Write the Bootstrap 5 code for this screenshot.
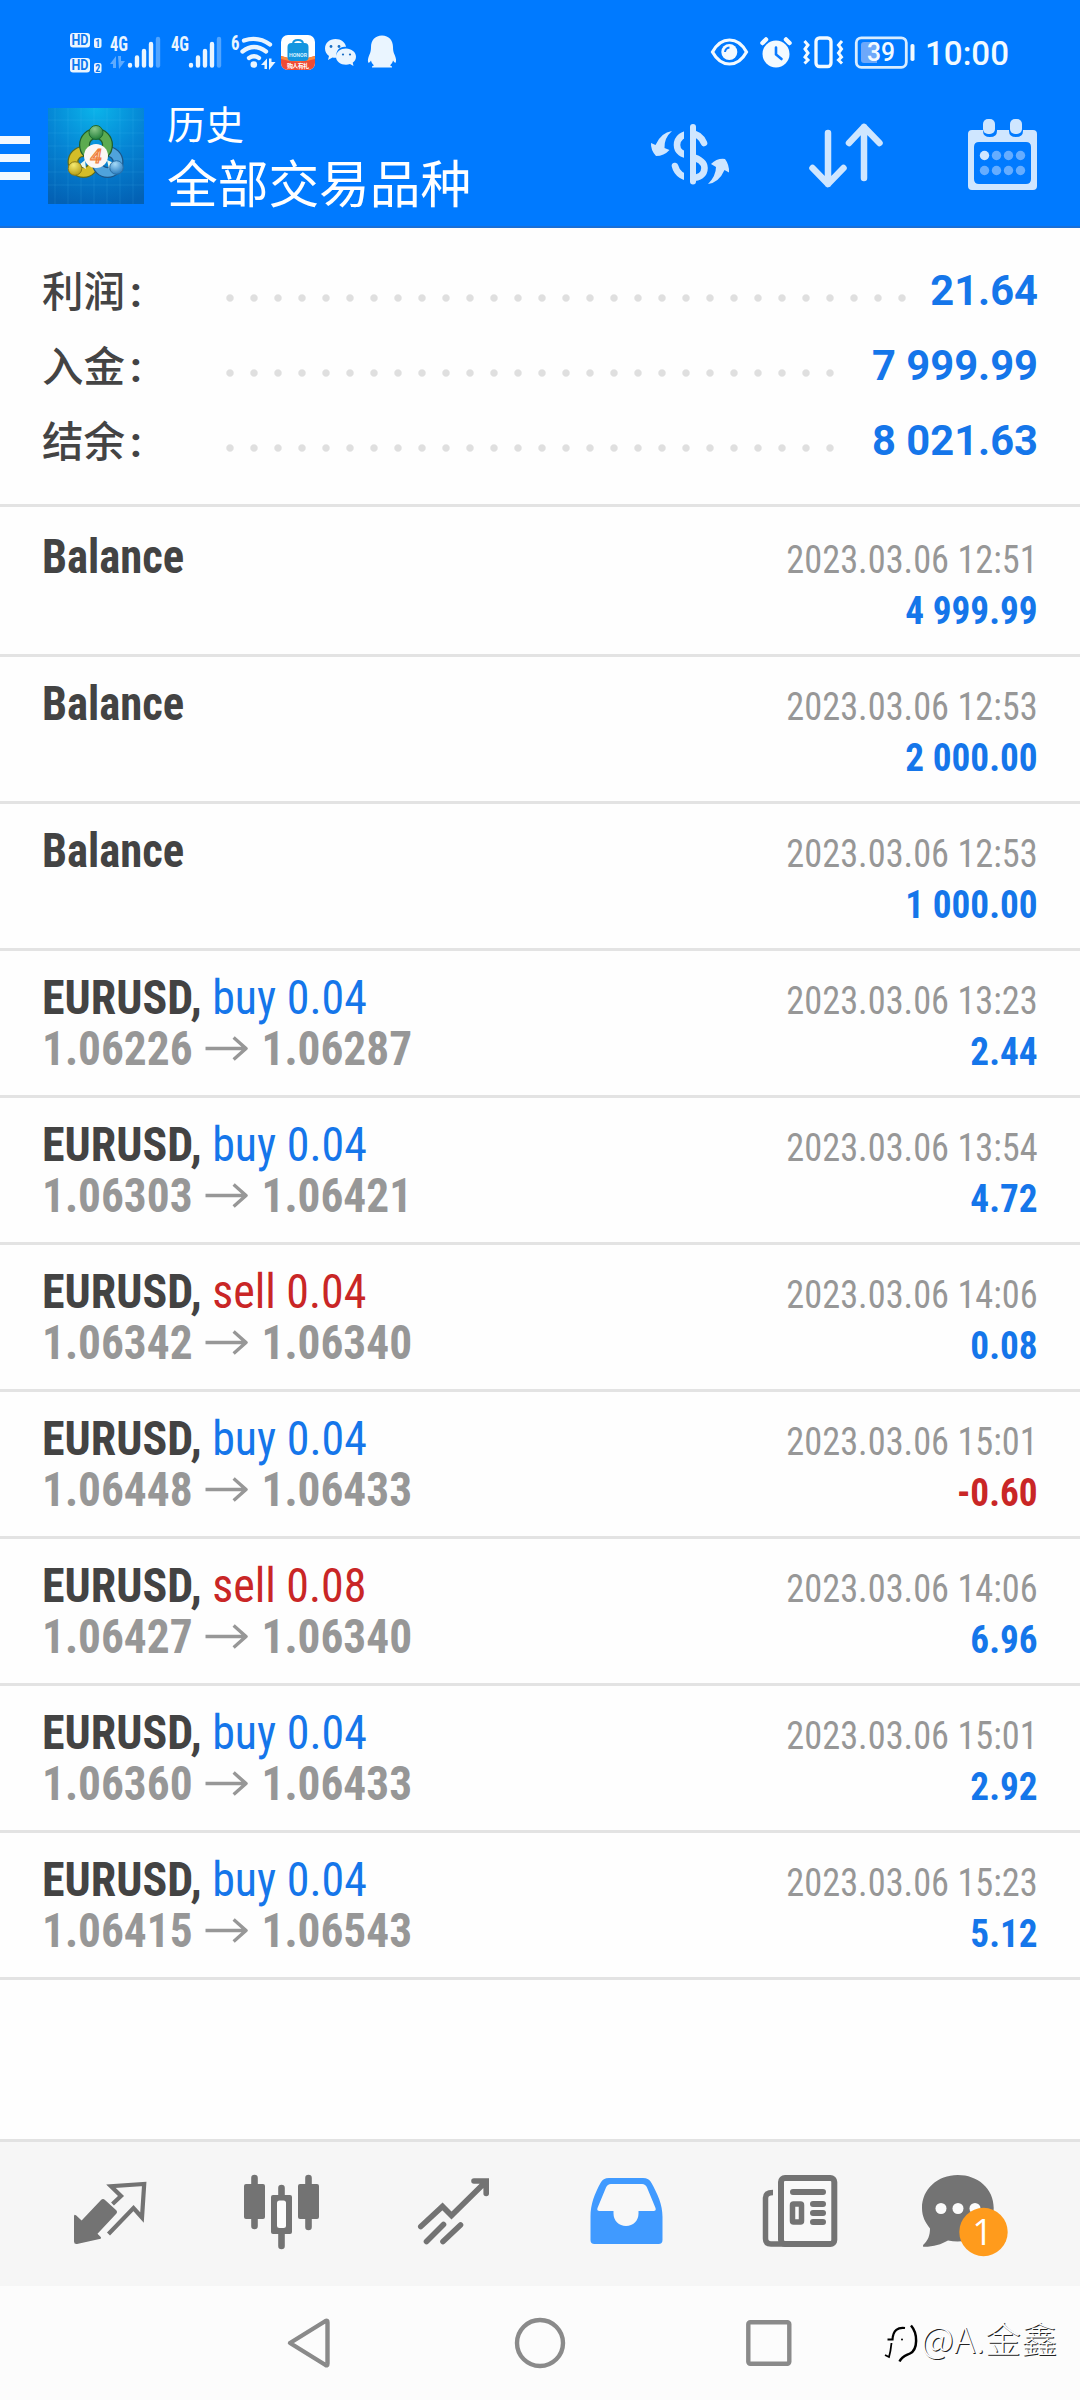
<!DOCTYPE html>
<html lang="zh-CN">
<head>
<meta charset="utf-8">
<meta name="viewport" content="width=device-width, initial-scale=1">
<title>历史</title>
<link rel="stylesheet" href="https://cdn.jsdelivr.net/npm/bootstrap@5.3.0/dist/css/bootstrap.min.css">
<script src="https://cdn.jsdelivr.net/npm/bootstrap@5.3.0/dist/js/bootstrap.bundle.min.js"></script>
<style>
  body { background: #fefefe; font-family: Roboto, "Noto Sans CJK SC", sans-serif; }
  .screen { width: 1080px; height: 2400px; overflow: hidden; }
  .top-area { height: 228px; background: #007aff; border-bottom: 2px solid #1a6fd6; }
  .status-row { height: 100px; }
  .title-row { height: 126px; }
  svg { display: block; flex: none; }
  .brand-tile { width: 96px; height: 96px; margin: 8px 23px 0 18px; }
  .title-small { font: 400 38.500px/46px "Noto Sans CJK SC", sans-serif; margin-top: -1px; }
  .title-big { font: 400 50.700px/62px "Noto Sans CJK SC", sans-serif; margin-top: 5px; white-space: nowrap; }
  .summary { height: 279px; padding: 25px 42px 0; border-bottom: 3px solid #e3e3e3; }
  .sum-line { height: 75px; }
  .sum-label { width: 176px; height: 77px; color: #444; font: 500 41.500px/75px "Noto Sans CJK SC", sans-serif; }
  .sum-label b { font: 700 42px/75px Roboto, sans-serif; margin-left: 5px; }
  .dots { height: 8px; margin-top: 15px; background: radial-gradient(circle at 12px 4px, #dfdfdf 3.200px, transparent 4.200px) 0 0 / 24px 8px repeat-x; }
  .dots-long { width: 696px; }
  .dots-short { width: 624px; }
  .sum-value { font: 700 41.700px/75px Roboto, sans-serif; }
  .c-blue { color: #1576ea; }
  .c-red { color: #c92626; }
  .deals { padding-top: 3px; height: 1632px; }
  .deal { height: 147px; padding: 21px 42px 0; border-bottom: 3px solid #e3e3e3; font: 400 48px/51px "Roboto Condensed", Roboto, sans-serif; white-space: nowrap; }
  .deal strong { color: #434343; font-weight: 700; }
  /* tighter glyph widths than the stock condensed face */
  .narrow-name { transform: scaleX(.93); transform-origin: left; }
  .narrow-deal { transform: scaleX(.957); transform-origin: left; }
  .prices { color: #979797; font-weight: 700; transform: scaleX(.944); transform-origin: left; }
  .prices svg { margin: 0 15px 0 13px; }
  .deal-right { font-size: 39px; padding-top: 4px; }
  .stamp { color: #979797; transform: scaleX(.932); transform-origin: right; }
  .result { transform: scaleX(.955); transform-origin: right; }
  .tabs { height: 147px; background: #f6f6f6; border-top: 3px solid #e2e2e2; }
  .sys { height: 114px; background: #fcfcfc; }
  .watermark { color: #fdfdfd; font: 300 36px/60px "Noto Sans CJK SC", sans-serif; text-shadow: 1px 1px 0 #222; white-space: nowrap; letter-spacing: .3px; margin-top: -3px; }
</style>
</head>
<body>
<div class="screen d-flex flex-column">
  <header class="top-area text-white flex-shrink-0">
    <div class="status-row d-flex">
      <!-- signal strength -->
      <svg width="228" height="100" viewBox="0 0 228 100" fill="#eaf5ff" font-family="Roboto Condensed, sans-serif" font-weight="700">
        <rect x="70" y="33" width="20" height="14.500" rx="3"/><rect x="70" y="58" width="20" height="14.500" rx="3"/>
        <g fill="#0a78f0" font-size="14" font-family="Roboto, sans-serif"><text x="71.500" y="45.300" textLength="17" lengthAdjust="spacingAndGlyphs">HD</text><text x="71.500" y="70.300" textLength="17" lengthAdjust="spacingAndGlyphs">HD</text></g>
        <rect x="94" y="38" width="7.500" height="10" rx="2"/><rect x="94" y="63" width="7.500" height="10" rx="2"/>
        <g fill="#0a78f0" font-size="10"><text x="95.300" y="46.600">1</text><text x="95.300" y="71.600">2</text></g>
        <g font-size="19.500"><text x="110" y="50.500" textLength="18" lengthAdjust="spacingAndGlyphs">4G</text><text x="171" y="50.500" textLength="18" lengthAdjust="spacingAndGlyphs">4G</text></g>
        <path opacity=".4" d="M110 64 116 56v12h-3v-4zM118 56h3v5h4l-6 8z"/>
        <g id="bars" stroke="#eaf5ff" stroke-width="4.400" stroke-linecap="round"><path d="M130 65v.5M137 57.500v8M144 51v14.500M151 44v21.500"/><path opacity=".35" d="M158 39v26.500"/></g>
        <use href="#bars" x="61"/>
      </svg>
      <!-- wifi, apps -->
      <svg width="192" height="100" viewBox="228 0 192 100" fill="#eaf5ff">
        <text x="231" y="50" font-size="20" font-weight="700" font-family="Roboto Condensed, sans-serif" textLength="8.500" lengthAdjust="spacingAndGlyphs">6</text>
        <circle cx="253.800" cy="64.500" r="3.300"/>
        <g fill="none" stroke="#eaf5ff" stroke-width="4.300" stroke-linecap="round"><path d="M244 40.500Q258 36 270 44.500"/><path d="M242.500 51.500Q254 42.500 266 51.500"/><path d="M249 58Q254 54.500 259 58"/></g>
        <path d="M261 65 267 58.500V69h-2.500v-4zM269 58.500h2.500V62h4L269 70z"/>
        <clipPath id="appclip"><rect x="281" y="35" width="34" height="35" rx="7"/></clipPath>
        <g clip-path="url(#appclip)"><rect x="281" y="35" width="34" height="35" fill="#fff"/><path d="M281 56Q298 62 315 56V70H281z" fill="#ee4b35"/><path d="M281 56Q298 62 315 56v3Q298 64 281 59z" fill="#ff8a3a"/></g>
        <rect x="287.500" y="43" width="21" height="18" rx="4" fill="#1496e0"/><path d="M293 44q0-4 5-4t5 4" fill="none" stroke="#1496e0" stroke-width="2"/>
        <text x="289" y="57" font-size="6" fill="#d8f2ff" font-weight="700" font-family="Roboto, sans-serif" textLength="18" lengthAdjust="spacingAndGlyphs">HONOR</text>
        <text x="287" y="67.500" font-size="6" fill="#fff" font-weight="700" font-family="Noto Sans CJK SC, sans-serif" textLength="22">购人有礼</text>
        <path d="M335.500 39c-6 0-10.500 4-10.500 9.500 0 3 1.500 5.500 4 7.500l-1 4 4.500-2.500q2 .5 4 .3C335 50 341 46 346 47c-.5-4.500-5-8-10.500-8z"/>
        <path d="M346 48.500c-5.500 0-10 3.500-10 8.200s4.500 8 10 8q2 0 4-.6l3.500 2-.8-3.300c2-1.500 3.300-3.500 3.300-6 0-4.700-4.500-8.300-10-8.300z"/>
        <g fill="#1b6fc4"><circle cx="331" cy="46.500" r="1.400"/><circle cx="339" cy="46.500" r="1.400"/><circle cx="343" cy="54.500" r="1.100"/><circle cx="350" cy="54.500" r="1.100"/></g>
        <path d="M382 35.500c-7 0-11 5-11 11.500 0 3-.3 5-1.700 8-1.300 3-1.800 6-1 7.500.7.800 2-1 2.700-2 .4 2 1.500 3.500 3 5-1.500.4-2.200 1-2 2h20c.2-1-.5-1.600-2-2 1.500-1.500 2.600-3 3-5 .8 1 2 2.800 2.700 2 .8-1.500.3-4.500-1-7.500-1.400-3-1.700-5-1.700-8 0-6.500-4-11.500-11-11.500z"/>
      </svg>
      <!-- system indicators -->
      <svg class="ms-auto" width="380" height="100" viewBox="700 0 380 100" fill="#f3faff">
        <path d="M712.500 52Q719 40 729.500 40T746.500 52Q740 64 729.500 64T712.500 52z" fill="none" stroke="#f3faff" stroke-width="3.200"/><circle cx="729.300" cy="52" r="8"/><path d="M725 52q.5-4 4.500-4.500" fill="none" stroke="#0a7aff" stroke-width="2"/>
        <circle cx="776" cy="54" r="13.500"/><g fill="none" stroke-linecap="round"><path d="M762.500 43 766 39.500M789.500 43 786 39.500" stroke="#f3faff" stroke-width="4.500"/><path d="M776 47.500v7l5.500 4.500" stroke="#0a7aff" stroke-width="2.600"/></g>
        <g fill="none" stroke="#f3faff" stroke-width="3.300"><rect x="816" y="38" width="15" height="28.500" rx="3.500"/><path d="M804.500 41l3.500 4-3 4 3 4-3 4 3 3-3.500 3.500M842 41l-3.500 4 3 4-3 4 3 4-3 3 3.500 3.500" stroke-width="3"/></g>
        <rect x="856.300" y="37.800" width="50" height="29.500" rx="5" fill="none" stroke="#d9edff" stroke-width="2.800"/><path d="M861 45q0-3 3-3h13v21h-13q-3 0-3-3z" fill="#6da8fa"/><rect x="910.500" y="44" width="4" height="17" rx="1.800"/>
        <text x="867" y="61" font-size="26" font-weight="500" font-family="Roboto, sans-serif" textLength="28" lengthAdjust="spacingAndGlyphs">39</text>
        <text x="925" y="65" font-size="34" font-weight="500" font-family="Roboto, sans-serif" textLength="84" lengthAdjust="spacingAndGlyphs">10:00</text>
      </svg>
    </div>
    <div class="title-row d-flex">
      <svg width="30" height="126" viewBox="0 100 30 126" fill="#f2f9ff"><path d="M0 136h30v8H0zM0 154h30v8H0zM0 172h30v8H0z"/></svg>
      <svg class="brand-tile" viewBox="48 108 96 96">
        <defs>
          <radialGradient id="sky" cx=".5" cy="0" r="1.050"><stop offset="0" stop-color="#0bb4ea"/><stop offset=".5" stop-color="#0584d4"/><stop offset="1" stop-color="#0361b4"/></radialGradient>
          <radialGradient id="gr" cx=".4" cy=".25" r=".8"><stop offset="0" stop-color="#8cc98a"/><stop offset="1" stop-color="#1c7a35"/></radialGradient>
          <radialGradient id="ye" cx=".4" cy=".25" r=".8"><stop offset="0" stop-color="#f5ea70"/><stop offset="1" stop-color="#b39a10"/></radialGradient>
          <radialGradient id="bl" cx=".4" cy=".25" r=".8"><stop offset="0" stop-color="#a5daf8"/><stop offset="1" stop-color="#1f75bb"/></radialGradient>
        </defs>
        <rect x="48" y="108" width="96" height="96" fill="url(#sky)"/>
        <path d="M55 108v96M68 108v96M81 108v96M94 108v96M107 108v96M120 108v96M133 108v96M48 120h96M48 133h96M48 146h96M48 159h96M48 172h96M48 185h96" stroke="#5cc8ff" stroke-opacity=".13"/>
        <circle cx="83.500" cy="162" r="10.500" fill="none" stroke="#5d6a1c" stroke-width="11"/><circle cx="83.500" cy="162" r="10.500" fill="none" stroke="#d3bd28" stroke-width="8.500"/>
        <circle cx="107.500" cy="162" r="10.500" fill="none" stroke="#1c5688" stroke-width="11"/><circle cx="107.500" cy="162" r="10.500" fill="none" stroke="#4fa3dc" stroke-width="8.500"/>
        <circle cx="96" cy="145" r="11.500" fill="none" stroke="#1f5f2b" stroke-width="11"/><circle cx="96" cy="145" r="11.500" fill="none" stroke="#5cab50" stroke-width="8.500"/>
        <path d="M85 160l-6 5 7 4zM107 160l7 3-5 6z" fill="#eaf7e8"/>
        <circle cx="96" cy="132.500" r="7" fill="url(#gr)" stroke="#1c6a30"/><circle cx="75" cy="168.500" r="6.800" fill="url(#ye)" stroke="#8a7a15"/><circle cx="116.500" cy="167.500" r="6.800" fill="url(#bl)" stroke="#2a6ea5"/>
        <circle cx="96" cy="156" r="12" fill="#fbf7f4"/>
        <text x="96" y="163" text-anchor="middle" font-size="20" font-style="italic" font-weight="500" font-family="Roboto, sans-serif" fill="#ffd9b0" stroke="#ee7d3c" stroke-width="1.200">4</text>
      </svg>
      <div class="flex-grow-1">
        <div class="title-small">历史</div>
        <div class="title-big">全部交易品种</div>
      </div>
      <svg width="120" height="126" viewBox="630 100 120 126" fill="#cfe6ff">
        <clipPath id="cutS"><path d="M660 110h24v90h-24zM690 110h30v90h-30z"/></clipPath>
        <path clip-path="url(#cutS)" d="M704 143C701 136 697 133.500 691 133.500C683 133.500 677 138 677 145C677 152 682 154 691 156.500C700 159 704.500 162 704.500 168C704.500 175 699 178 692 178C684 178 677 174 675 166" fill="none" stroke="#cfe6ff" stroke-width="6.600" stroke-linecap="round"/>
        <path d="M693 127v54.500" stroke="#cfe6ff" stroke-width="6" stroke-linecap="round"/>
        <path d="M672 131Q661 132.500 655.500 145L651 143Q650.500 150 656 156Q664 156 669.500 150L664.500 148Q664 138 672 131z"/>
        <path d="M708 184Q719 182.500 724.500 170L729 172.500Q729.500 165 725 159Q717 158 711 164L716 167Q716 176 708 184z"/>
      </svg>
      <svg width="180" height="126" viewBox="750 100 180 126" fill="none" stroke="#cfe6ff" stroke-width="6.500" stroke-linecap="round" stroke-linejoin="round"><path d="M828 133v51M812.500 168 828 184l15.500-16M864 178v-51M849 143l15-16 15.500 16"/></svg>
      <svg width="150" height="126" viewBox="930 100 150 126" fill="#cfe6ff">
        <path fill-rule="evenodd" d="M972 130h11v1q0 6 7 6t7-6v-1h12v1q0 6 7 6t7-6v-1h10q4 0 4 4v52q0 4-4 4h-61q-4 0-4-4v-52q0-4 4-4zM979 142h47q5 0 5 5v32q0 5-5 5h-47q-5 0-5-5v-32q0-5 5-5z"/>
        <rect x="983" y="119" width="12" height="15" rx="5"/><rect x="1010" y="119" width="12" height="15" rx="5"/>
        <circle cx="984.500" cy="155.500" r="4.700"/><g fill="#66adff"><circle cx="996.500" cy="155.500" r="4.700"/><circle cx="1008.500" cy="155.500" r="4.700"/><circle cx="1020.500" cy="155.500" r="4.700"/><circle cx="984.500" cy="170.500" r="4.700"/><circle cx="996.500" cy="170.500" r="4.700"/><circle cx="1008.500" cy="170.500" r="4.700"/><circle cx="1020.500" cy="170.500" r="4.700"/></g>
      </svg>
    </div>
  </header>

  <section class="summary flex-shrink-0">
    <div class="sum-line d-flex align-items-center"><div class="sum-label">利润<b>:</b></div><div class="dots dots-long"></div><div class="sum-value c-blue ms-auto">21.64</div></div>
    <div class="sum-line d-flex align-items-center"><div class="sum-label">入金<b>:</b></div><div class="dots dots-short"></div><div class="sum-value c-blue ms-auto">7 999.99</div></div>
    <div class="sum-line d-flex align-items-center"><div class="sum-label">结余<b>:</b></div><div class="dots dots-short"></div><div class="sum-value c-blue ms-auto">8 021.63</div></div>
  </section>

  <main class="deals flex-shrink-0" id="deals"></main>

  <nav class="tabs d-flex flex-shrink-0">
    <svg width="180" height="144" viewBox="0 2142 180 144" fill="#737373"><path d="M74 2216.500q0-3 2-1.200L81.600 2220.500 101 2200q2-2 4 0L116 2210q2 2 0 4L97.500 2233.700l3 3q1.500 1.800-1 2.300L77 2244q-3 .3-3-2.500z"/><path d="M112.500 2204 121 2196l-10-9.800 33.200-2.200-2.200 33.500-8.500-9.500L108.500 2234" fill="none" stroke="#737373" stroke-width="4.200" stroke-linejoin="miter"/></svg>
    <svg width="180" height="144" viewBox="180 2142 180 144" fill="#737373"><path d="M254.500 2178v48M308.500 2178v49M281.500 2188v12M281.500 2232v14" stroke="#737373" stroke-width="6.600" stroke-linecap="round"/><rect x="244" y="2184" width="21" height="35" rx="2"/><rect x="298" y="2184" width="21" height="35" rx="2"/><rect x="271" y="2195" width="21" height="39" rx="2"/><rect x="277" y="2200.500" width="9" height="27.500" rx="2.500" fill="#fcfcfc"/></svg>
    <svg width="180" height="144" viewBox="360 2142 180 144" fill="none" stroke="#737373" stroke-width="5.600" stroke-linecap="round"><path d="M420.800 2226.500 442.500 2206.500 451.500 2215.500 486 2181.500M474 2181h12.200v12.500M426.500 2241.500 443.500 2224.500M443 2241.500 460.500 2225"/></svg>
    <svg width="180" height="144" viewBox="540 2142 180 144"><path fill="#409aff" d="M609 2178h34q6 0 8.500 5c6 11 11 21 11 34v23q0 4-4 4h-64q-4 0-4-4v-23c0-13 4-23 10-34q2.500-5 8.500-5z"/><path fill="#f8f8f8" d="M611 2184h31q3.500 0 5 3.500l8.500 20.500q1 3-2 3h-15v2.500c0 7.500-5.500 12.500-12.500 12.500s-12.500-5-12.500-12.500V2211h-14q-3 0-2-3l8.500-20.500q1.500-3.500 5-3.500z"/></svg>
    <svg width="180" height="144" viewBox="720 2142 180 144" fill="none" stroke="#737373" stroke-width="6"><rect x="781" y="2178" width="53.300" height="66" rx="4" fill="#f9f9f9"/><path d="M785 2244h-14q-5.500 0-5.500-5.500V2198q0-5.500 7.500-5.500" stroke-width="5.500"/><path d="M793 2192h30M813 2204h10M813 2213h10M813 2222h10" stroke-linecap="round"/><rect x="792.500" y="2204" width="9" height="18" rx="1" stroke-width="5.500"/></svg>
    <svg width="180" height="144" viewBox="900 2142 180 144" fill="#737373"><path d="M957.700 2175c-20 0-35.700 14-35.700 33 0 9 3.500 14.500 8 20.500 0 7-2 12-6.500 16-1 1.500-.5 2.500 1 2.300 9 0 17-2.500 23.500-6.300q5 1 9.700 1c20 0 36-14 36-33.500s-16-33-36-33z"/><g fill="#fbfbfb"><circle cx="941" cy="2208.500" r="5.500"/><circle cx="958" cy="2208.500" r="5.500"/><circle cx="975" cy="2208.500" r="5.500"/></g><circle cx="983.500" cy="2232" r="24.200" fill="#ff9b1c"/><text x="982.500" y="2244.500" text-anchor="middle" font-size="36" font-family="Open Sans, sans-serif" fill="#fff">1</text></svg>
  </nav>
  <footer class="sys d-flex flex-shrink-0">
    <svg width="878" height="114" viewBox="0 2286 878 114" fill="none" stroke="#8a8a8a" stroke-width="4.400" stroke-linejoin="round"><path d="M290 2343 325.500 2321q2-1 2 1.500v41q0 2.500-2 1.500z"/><circle cx="540" cy="2343" r="23"/><rect x="748.300" y="2322.300" width="41" height="41.500" rx="2"/></svg>
    <div class="d-flex pt-4">
      <svg width="43" height="66" viewBox="878 2310 43 66" fill="none" stroke="#000"><path d="M905 2328c-7-1-12 2-12.500 11.500h-5" stroke-width="2.200"/><path d="M891.500 2343c-.5 5-1 9-2.500 14l-4-2" stroke-width="1.800"/><path d="M911 2325.500c7 8 7 24-1 28-5 2.500-8 3-10.500 8" stroke-width="2.500"/><circle cx="902" cy="2339.500" r="1" fill="#000" stroke="none"/></svg>
      <div class="watermark">@A.金鑫</div>
    </div>
  </footer>
</div>
<script>
  // [symbol, side, volume, open, close, time, result]
  const deals = [
    ["Balance", "", "", "", "", "12:51", "4 999.99"],
    ["Balance", "", "", "", "", "12:53", "2 000.00"],
    ["Balance", "", "", "", "", "12:53", "1 000.00"],
    ["EURUSD,", "buy", "0.04", "1.06226", "1.06287", "13:23", "2.44"],
    ["EURUSD,", "buy", "0.04", "1.06303", "1.06421", "13:54", "4.72"],
    ["EURUSD,", "sell", "0.04", "1.06342", "1.06340", "14:06", "0.08"],
    ["EURUSD,", "buy", "0.04", "1.06448", "1.06433", "15:01", "-0.60"],
    ["EURUSD,", "sell", "0.08", "1.06427", "1.06340", "14:06", "6.96"],
    ["EURUSD,", "buy", "0.04", "1.06360", "1.06433", "15:01", "2.92"],
    ["EURUSD,", "buy", "0.04", "1.06415", "1.06543", "15:23", "5.12"]
  ];
  const arrow = '<svg width="45" height="51" viewBox="0 0 45 51" fill="none" stroke="#979797" stroke-width="3.600"><path d="M0 25.500h43M30 14.500l13 11-13 11"/></svg>';
  document.getElementById("deals").innerHTML = deals.map(([sym, side, vol, open, close, time, res]) => `
    <div class="deal d-flex justify-content-between">
      <div>
        <div class="${side ? "narrow-deal" : "narrow-name"}"><strong>${sym}</strong>${side ? ` <span class="${side === "buy" ? "c-blue" : "c-red"}">${side} ${vol}</span>` : ""}</div>
        ${open ? `<div class="prices d-flex">${open}${arrow}${close}</div>` : ""}
      </div>
      <div class="deal-right text-end">
        <div class="stamp">2023.03.06 ${time}</div>
        <div class="result fw-bold ${res[0] === "-" ? "c-red" : "c-blue"}">${res}</div>
      </div>
    </div>`).join("");
</script>
</body>
</html>
